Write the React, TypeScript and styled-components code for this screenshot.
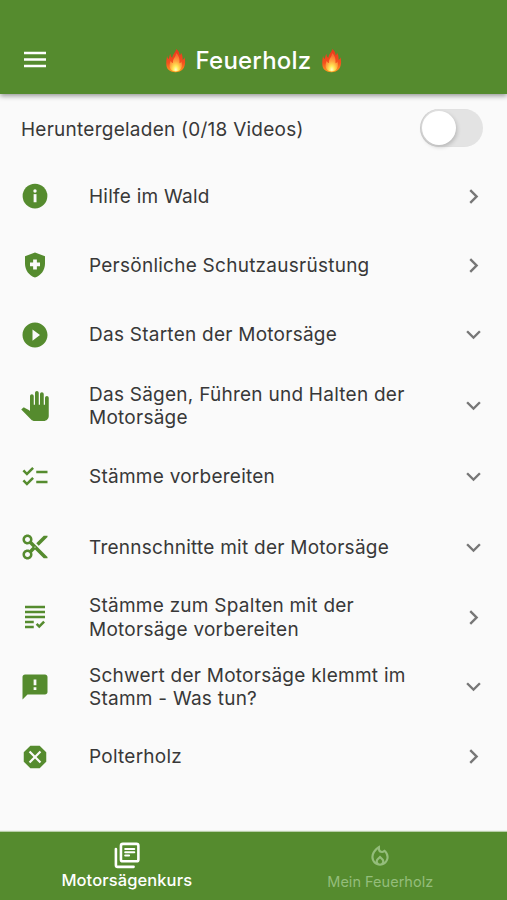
import React from "react";
import styled, { createGlobalStyle } from "styled-components";
import {
  MdHealthAndSafety, MdPlayCircleFilled, MdChecklist, MdContentCut, MdGrading,
  MdDangerous, MdChevronRight, MdExpandMore, MdOutlineLocalFireDepartment,
} from "react-icons/md";

const GREEN = "#558b2e";

const GlobalStyle = createGlobalStyle`
  * { box-sizing: border-box; }
  body { margin: 0; background: #fafafa; }
  button { border: 0; padding: 0; background: none; color: inherit; font: inherit; }
`;

const Screen = styled.div`
  display: flex;
  flex-direction: column;
  width: 507px;
  height: 900px;
  overflow: hidden;
  background: #fafafa;
  color: #383838;
  font-family: Inter, "Liberation Sans", sans-serif;
`;

const Header = styled.header`
  display: grid;
  grid-template-columns: 70px 1fr 70px;
  align-items: center;
  flex: none;
  height: 94px;
  padding-top: 27px;
  background: ${GREEN};
  color: #fff;
  box-shadow: 0 2px 5px rgba(0, 0, 0, 0.4);
`;

const MenuButton = styled.button`
  display: flex;
  justify-content: center;
  padding-bottom: 3px;
`;

const Title = styled.h1`
  display: flex;
  align-items: center;
  justify-content: center;
  gap: 10px;
  margin: 0;
  font-size: 24px;
  line-height: 30px;
  font-weight: 500;
  letter-spacing: 0.2px;
`;

const Flame = styled.svg`
  width: 21px;
  height: 24px;
`;

const DownloadRow = styled.label`
  display: flex;
  align-items: center;
  justify-content: space-between;
  flex: none;
  height: 68px;
  padding: 2px 24px 0 21px;
  font-size: 19px;
  letter-spacing: 0.25px;
`;

const Switch = styled.span`
  display: flex;
  align-items: center;
  width: 63px;
  height: 38px;
  padding: 2px;
  margin-bottom: 2px;
  border-radius: 19px;
  background: #e3e3e3;
  box-shadow: inset 1px 0 1px rgba(0, 0, 0, 0.1);
`;

const Thumb = styled.span`
  width: 34px;
  height: 34px;
  border-radius: 50%;
  background: #fff;
  box-shadow: 1px 2px 4px rgba(0, 0, 0, 0.2);
`;

const List = styled.ul`
  display: flex;
  flex-direction: column;
  flex: 1;
  margin: 0;
  padding: 0;
  list-style: none;
`;

const Item = styled.li<{ $height: number }>`
  display: grid;
  grid-template-columns: 68px 1fr 32px;
  align-items: center;
  height: ${(p) => p.$height}px;
  padding: 0 18px 0 21px;
`;

const Leading = styled.span`
  display: flex;
  width: 28px;
  justify-content: center;
  padding-bottom: 1px;
  color: ${GREEN};
  font-size: 30px;
  svg { flex: none; }
`;

const Label = styled.span`
  font-size: 19px;
  line-height: 23.4px;
  letter-spacing: 0.25px;
  white-space: pre-line;
`;

const Trailing = styled.span`
  display: flex;
  justify-content: center;
  padding-bottom: 1px;
  color: #777;
  font-size: 29px;
`;

const BottomBar = styled.nav`
  display: grid;
  grid-template-columns: 1fr 1fr;
  flex: none;
  height: 68px;
  background: ${GREEN};
  box-shadow: 0 -1px 1px rgba(85, 139, 46, 0.4);
`;

const Tab = styled.button<{ $active?: boolean }>`
  display: flex;
  flex-direction: column;
  align-items: center;
  padding-top: ${(p) => (p.$active ? 8 : 11)}px;
  color: ${(p) => (p.$active ? "#fff" : "#94bd7b")};
  font-size: ${(p) => (p.$active ? 16.5 : 14.5)}px;
  font-weight: ${(p) => (p.$active ? 500 : 400)};
  line-height: 20px;
  letter-spacing: ${(p) => (p.$active ? 0.1 : 0.02)}px;
  svg { flex: none; font-size: 26px; }
`;

const TabLabel = styled.span<{ $offset: number }>`
  margin-top: ${(p) => p.$offset}px;
`;

function FireEmoji({ id }: { id: string }) {
  return (
    <Flame viewBox="0 0 21 25" aria-hidden="true">
      <defs>
        <linearGradient id={id} x1="0" y1="0" x2="0" y2="1">
          <stop offset="0" stopColor="#e9371c" />
          <stop offset="0.6" stopColor="#f4511e" />
          <stop offset="1" stopColor="#ff9d20" />
        </linearGradient>
        <radialGradient id={`${id}-core`} cx="0.5" cy="0.9" r="0.8">
          <stop offset="0" stopColor="#fffbd0" />
          <stop offset="0.25" stopColor="#ffec58" />
          <stop offset="0.6" stopColor="#ffa23c" />
          <stop offset="1" stopColor="#f96a32" />
        </radialGradient>
      </defs>
      <path fill={`url(#${id})`} d="M11.200 0c-.2 3-3.400 5-4 9C6 8.500 5.300 7 5.400 5 3.900 6.500 4.200 9 3.400 10.500 2.500 10 2 8.500 1.700 7 1.200 11-.3 17.500 2.600 21c3.600 4.200 11.900 4.200 15.500.2 3-3.700 2.600-8.700 1.900-12.700-.5 1.500-1.200 2.200-2.200 2.600.2-2.700 0-5.100-1.600-7.300-.2 1.500-.7 2.200-1.400 2.700C14.600 4.500 14.200 1.700 11.200 0Z" />
      <path fill={`url(#${id}-core)`} d="M11 4.500c.3 3.500-3.500 5.500-3.200 10-1.200-.3-1.900-1.200-2.200-2.300-1.700 3.600-1.700 7.600.7 9.700 2.500 2 6.500 2 8.800 0 2.300-2.200 2.500-5.800 1.500-9-.5 1-1 1.600-1.900 1.900.2-4-.5-8.200-3.700-10.300Z" />
    </Flame>
  );
}

function MenuIcon() {
  return (
    <svg width="22" height="18" viewBox="0 0 22 18" stroke="currentColor" strokeWidth="2.500" aria-hidden="true">
      <path d="M0 3h22M0 9.500h22M0 16h22" />
    </svg>
  );
}

function InfoIcon() {
  return (
    <svg width="30" height="30" viewBox="0 0 24 24" fill="currentColor" aria-hidden="true">
      <circle cx="12" cy="12" r="9.900" />
      <circle cx="12" cy="8" r="1.350" fill="#fafafa" />
      <path d="M10.900 10.500h2.300V17h-2.300z" fill="#fafafa" />
    </svg>
  );
}

function FeedbackIcon() {
  return (
    <svg width="30" height="30" viewBox="0 0 24 24" fill="currentColor" aria-hidden="true">
      <path d="M20 2H4c-1.100 0-2 .9-2 2v18l4-4h14c1.100 0 2-.9 2-2V4c0-1.100-.9-2-2-2Z" />
      <path d="M10.900 6h2.200v4.500h-2.200zM10.900 12.200h2.200v2.200h-2.200z" fill="#fafafa" />
    </svg>
  );
}

function PalmIcon() {
  return (
    <svg width="30" height="30" viewBox="0 0 24 24" fill="currentColor" aria-hidden="true">
      <path d="M23 5.500V20c0 2.200-1.800 4-4 4h-7.300c-1.080 0-2.100-.43-2.850-1.190L1 14.830s1.260-1.230 1.300-1.250c.22-.19.49-.29.79-.29.22 0 .42.06.6.16.04.01 4.310 2.460 4.310 2.460V4c0-.83.67-1.500 1.500-1.500S11 3.170 11 4v7h1V1.500c0-.83.67-1.500 1.500-1.500S15 .67 15 1.500V11h1V2.500c0-.83.67-1.500 1.500-1.500s1.500.67 1.500 1.500V11h1V5.500c0-.83.67-1.500 1.500-1.500s1.500.67 1.500 1.500z" />
    </svg>
  );
}

function CourseIcon() {
  return (
    <svg width="31" height="31" viewBox="0 0 24 24" fill="none" stroke="currentColor" strokeLinecap="round" strokeLinejoin="round" aria-hidden="true">
      <g strokeWidth="2">
        <rect x="7.700" y="3" width="13.500" height="13.500" rx="1.500" />
        <path d="M3.800 7v12.500c0 .8.500 1.300 1.300 1.300h12.400" />
      </g>
      <path d="M11 7h7M11 9.500h7M11 12h3" strokeWidth="1.600" />
    </svg>
  );
}

const items = [
  { icon: <InfoIcon />, text: "Hilfe im Wald", height: 69 },
  { icon: <MdHealthAndSafety />, text: "Persönliche Schutzausrüstung", height: 69 },
  { icon: <MdPlayCircleFilled />, text: "Das Starten der Motorsäge", height: 70, expandable: true },
  { icon: <PalmIcon />, text: "Das Sägen, Führen und Halten der\nMotorsäge", height: 72, expandable: true },
  { icon: <MdChecklist />, text: "Stämme vorbereiten", height: 70, expandable: true },
  { icon: <MdContentCut />, text: "Trennschnitte mit der Motorsäge", height: 71, expandable: true },
  { icon: <MdGrading />, text: "Stämme zum Spalten mit der\nMotorsäge vorbereiten", height: 69 },
  { icon: <FeedbackIcon />, text: "Schwert der Motorsäge klemmt im\nStamm - Was tun?", height: 70, expandable: true },
  { icon: <MdDangerous />, text: "Polterholz", height: 70 },
];

export default function App() {
  return (
    <Screen>
      <GlobalStyle />
      <Header>
        <MenuButton aria-label="Menü"><MenuIcon /></MenuButton>
        <Title><FireEmoji id="flame-left" />Feuerholz<FireEmoji id="flame-right" /></Title>
      </Header>
      <DownloadRow>
        <span>Heruntergeladen (0/18 Videos)</span>
        <Switch role="switch" aria-checked={false}><Thumb /></Switch>
      </DownloadRow>
      <List>
        {items.map((item) => (
          <Item key={item.text} $height={item.height}>
            <Leading>{item.icon}</Leading>
            <Label>{item.text}</Label>
            <Trailing>{item.expandable ? <MdExpandMore /> : <MdChevronRight />}</Trailing>
          </Item>
        ))}
      </List>
      <BottomBar>
        <Tab $active><CourseIcon /><TabLabel $offset={-1}>Motorsägenkurs</TabLabel></Tab>
        <Tab><MdOutlineLocalFireDepartment /><TabLabel $offset={3}>Mein Feuerholz</TabLabel></Tab>
      </BottomBar>
    </Screen>
  );
}
